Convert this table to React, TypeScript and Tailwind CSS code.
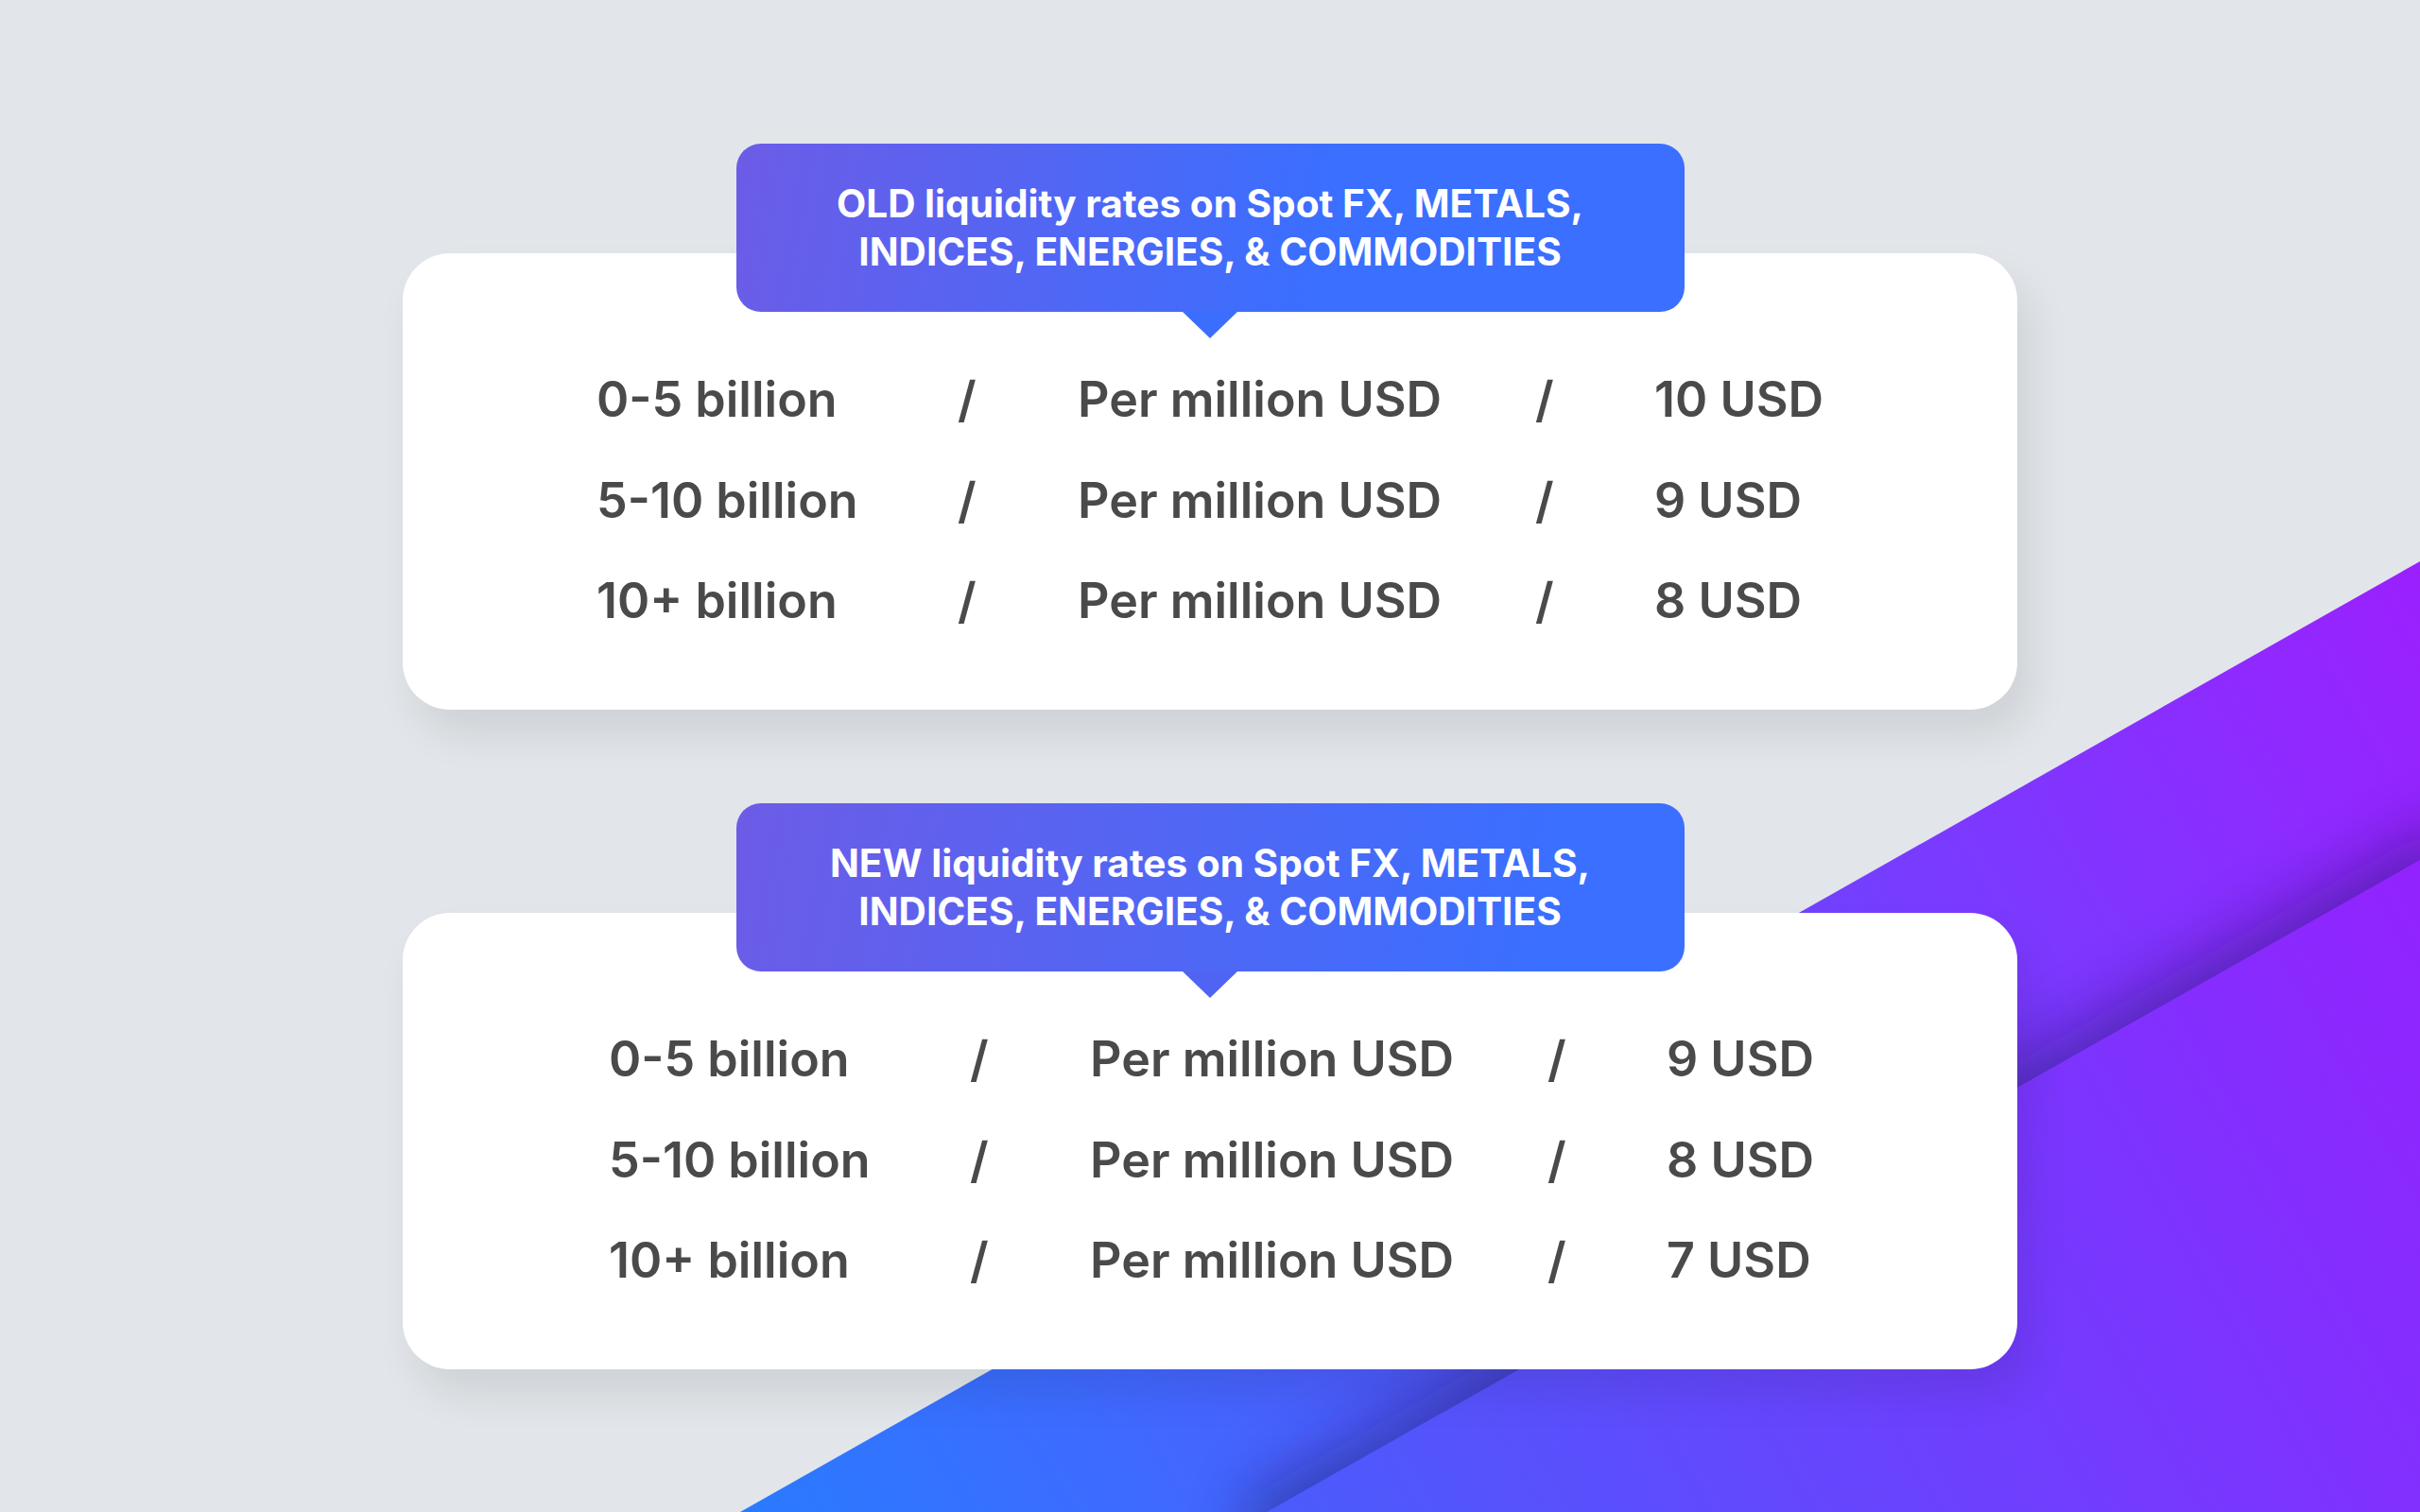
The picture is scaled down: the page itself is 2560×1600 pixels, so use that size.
import React from 'react';

type Row = [string, string];

const oldRates: Row[] = [
  ['0-5 billion', '10 USD'],
  ['5-10 billion', '9 USD'],
  ['10+ billion', '8 USD'],
];

const newRates: Row[] = [
  ['0-5 billion', '9 USD'],
  ['5-10 billion', '8 USD'],
  ['10+ billion', '7 USD'],
];

function Backdrop() {
  return (
    <svg
      className="absolute inset-0"
      width="2560"
      height="1600"
      viewBox="0 0 2560 1600"
      xmlns="http://www.w3.org/2000/svg"
    >
      <defs>
        <linearGradient id="gA" gradientUnits="userSpaceOnUse" x1="800" y1="1600" x2="2560" y2="600">
          <stop offset="0" stopColor="#2a7aff" />
          <stop offset="1" stopColor="#9b20ff" />
        </linearGradient>
        <linearGradient id="gB" gradientUnits="userSpaceOnUse" x1="1340" y1="1600" x2="2560" y2="910">
          <stop offset="0" stopColor="#4a5cfc" />
          <stop offset="1" stopColor="#9322ff" />
        </linearGradient>
        <filter id="soft" x="-20%" y="-20%" width="140%" height="140%">
          <feGaussianBlur stdDeviation="32" />
        </filter>
        <clipPath id="clipA">
          <polygon points="783,1600 2560,594 2560,1600" />
        </clipPath>
      </defs>
      <polygon points="783,1600 2560,594 2560,1600" fill="url(#gA)" />
      <g clipPath="url(#clipA)">
        <polygon
          points="1320,1585 2600,860 2600,1700 1320,1700"
          fill="#1c0a5a"
          opacity="0.42"
          filter="url(#soft)"
        />
      </g>
      <polygon points="1340,1600 2560,910 2560,1600" fill="url(#gB)" />
    </svg>
  );
}

function RateCard({
  title,
  rows,
  shift,
  tagBg,
  arrow,
}: {
  title: [string, string];
  rows: Row[];
  shift: string;
  tagBg: string;
  arrow: string;
}) {
  return (
    <div className="flex flex-col items-center">
      <div className={`relative z-10 flex h-[178px] w-[1003px] items-center justify-center rounded-[26px] ${tagBg}`}>
        <p className="text-center text-[40.6px] font-bold leading-[51px] text-white">
          {title[0]}
          <br />
          {title[1]}
        </p>
        <div
          className={`absolute left-1/2 top-full h-[28px] w-[58px] -translate-x-1/2 [clip-path:polygon(0_0,100%_0,50%_100%)] ${arrow}`}
        />
      </div>
      <div className="-mt-[62px] h-[483px] w-[1708px] rounded-[50px] bg-white shadow-[14px_26px_44px_rgba(0,0,0,0.09)]">
        <div className={`flex flex-col pt-[102px] text-[52px] font-semibold leading-[106.5px] text-[#4a4a4a] ${shift}`}>
          {rows.map(([range, price]) => (
            <div key={range} className="flex">
              <span className="w-[382px]">{range}</span>
              <span className="w-[127px]">/</span>
              <span className="w-[484px]">Per million USD</span>
              <span className="w-[126px]">/</span>
              <span>{price}</span>
            </div>
          ))}
        </div>
      </div>
    </div>
  );
}

export default function App() {
  return (
    <div className="relative h-[1600px] w-[2560px] overflow-hidden bg-[#e2e6ea] font-['Inter',sans-serif]">
      <Backdrop />
      <div className="relative flex flex-col items-center gap-[99px] pt-[152px]">
        <RateCard
          title={['OLD liquidity rates on Spot FX, METALS,', 'INDICES, ENERGIES, & COMMODITIES']}
          rows={oldRates}
          shift="pl-[205px]"
          tagBg="bg-[linear-gradient(100deg,#6c5ce7_0%,#3a6fff_62%)]"
          arrow="bg-[#3c6efd]"
        />
        <RateCard
          title={['NEW liquidity rates on Spot FX, METALS,', 'INDICES, ENERGIES, & COMMODITIES']}
          rows={newRates}
          shift="pl-[218px]"
          tagBg="bg-[linear-gradient(100deg,#6c5ce7_0%,#3a6fff_85%)]"
          arrow="bg-[#4f64f2]"
        />
      </div>
    </div>
  );
}
